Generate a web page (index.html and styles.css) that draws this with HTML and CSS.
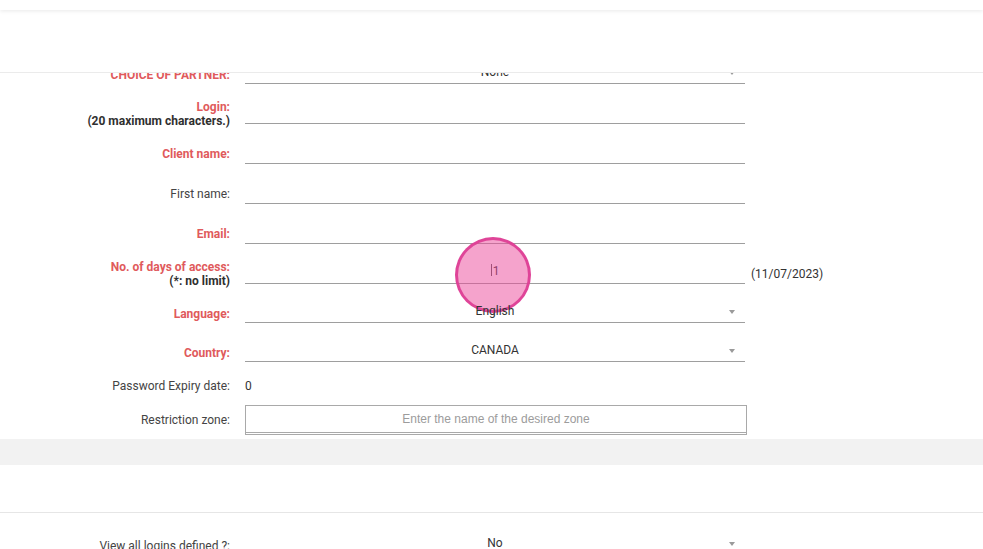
FILE: index.html
```html
<!DOCTYPE html>
<html lang="en">
<head>
<meta charset="utf-8">
<title>Client form</title>
<link rel="stylesheet" href="styles.css">
</head>
<body>
<div class="topbar"></div>
<header class="subheader"></header>
<main class="viewport">
  <form class="form">
    <div class="row srow">
      <label class="lbl req">CHOICE OF PARTNER:</label>
      <div class="field sel"><span class="val">None</span><i class="tri"></i></div>
    </div>
    <div class="row">
      <label class="lbl req">Login:<br><span class="note">(20 maximum characters.)</span></label>
      <div class="field"></div>
    </div>
    <div class="row">
      <label class="lbl req">Client name:</label>
      <div class="field"></div>
    </div>
    <div class="row">
      <label class="lbl">First name:</label>
      <div class="field"></div>
    </div>
    <div class="row">
      <label class="lbl req">Email:</label>
      <div class="field"></div>
    </div>
    <div class="row">
      <label class="lbl req">No. of days of access:<br><span class="note">(*: no limit)</span></label>
      <div class="field"><span class="val"><span class="cursor"></span>1</span><span class="click"></span></div>
      <span class="after">(11/07/2023)</span>
    </div>
    <div class="row srow">
      <label class="lbl req">Language:</label>
      <div class="field sel"><span class="val">English</span><i class="tri"></i></div>
    </div>
    <div class="row srow">
      <label class="lbl req">Country:</label>
      <div class="field sel"><span class="val">CANADA</span><i class="tri"></i></div>
    </div>
    <div class="row plain">
      <label class="lbl">Password Expiry date:</label>
      <span class="static">0</span>
    </div>
    <div class="row zone">
      <label class="lbl">Restriction zone:</label>
      <div class="box"><span class="ph">Enter the name of the desired zone</span></div>
    </div>
  </form>
  <div class="band"></div>
  <div class="spacer"></div>
  <div class="row srow last">
    <label class="lbl">View all logins defined ?:</label>
    <div class="field sel"><span class="val">No</span><i class="tri"></i></div>
  </div>
</main>
</body>
</html>
```

FILE: styles.css
```css
* { box-sizing: border-box; }
html, body { margin: 0; padding: 0; }
body {
  width: 983px;
  height: 549px;
  overflow: hidden;
  background: #fff;
  font-family: Roboto, "Liberation Sans", Arial, sans-serif;
  font-size: 12px;
  color: #333;
  display: flex;
  flex-direction: column;
}
.topbar {
  height: 10px;
  flex: none;
  background: #fff;
  box-shadow: 0 1px 4px rgba(0,0,0,0.09);
  position: relative;
  z-index: 2;
}
.subheader {
  height: 63px;
  flex: none;
  background: #fff;
  border-bottom: 1px solid #ebebeb;
}
.viewport {
  flex: 1;
  overflow: hidden;
  display: flex;
  flex-direction: column;
}
.form {
  margin: -8px 0 0 0;
  display: flex;
  flex-direction: column;
  gap: 20px;
  flex: none;
}
.row {
  display: flex;
  align-items: center;
  height: 20px;
  flex: none;
}
.row.srow { height: 19px; }
.lbl {
  width: 230px;
  flex: none;
  text-align: right;
  line-height: 14px;
  color: #444;
}
.lbl.req { color: #e05a5c; font-weight: 700; }
.note { color: #2f2f2f; font-weight: 700; }
.field {
  position: relative;
  margin-left: 15px;
  width: 500px;
  height: 20px;
  border-bottom: 1px solid #9e9e9e;
  display: flex;
  align-items: center;
  justify-content: center;
  padding-bottom: 5px;
  color: #333;
}
.field.sel { height: 19px; }
.val { line-height: 14px; }
.tri {
  position: absolute;
  right: 10px;
  top: 6px;
  width: 0;
  height: 0;
  border-left: 3.5px solid transparent;
  border-right: 3.5px solid transparent;
  border-top: 4px solid #9a9a9a;
}
.cursor {
  display: inline-block;
  width: 1px;
  height: 12px;
  background: #555;
  vertical-align: -1px;
  margin-right: 1px;
}
.click {
  position: absolute;
  left: 210px;
  top: -27px;
  width: 76px;
  height: 76px;
  border-radius: 50%;
  border: 3px solid rgba(222, 64, 150, 0.95);
  background: rgba(236, 72, 153, 0.5);
}
.after { margin-left: 6px; color: #333; }
.row.plain { margin-top: -6px; }
.static { margin-left: 15px; color: #333; line-height: 20px; }
.row.zone { margin-top: -11px; height: 30px; }
.box {
  margin-left: 15px;
  width: 502px;
  height: 30px;
  border: 1px solid #a9a9a9;
  border-bottom: 3px double #a9a9a9;
  display: flex;
  align-items: center;
  justify-content: center;
}
.ph {
  font-family: "Liberation Sans", Arial, sans-serif;
  font-size: 12px;
  color: #9c9c9c;
}
.band {
  flex: none;
  margin-top: 4px;
  height: 26px;
  background: #f2f2f2;
}
.spacer {
  flex: none;
  height: 48px;
  border-bottom: 1px solid #e6e6e6;
}
.row.last { margin-top: 23px; }
```
